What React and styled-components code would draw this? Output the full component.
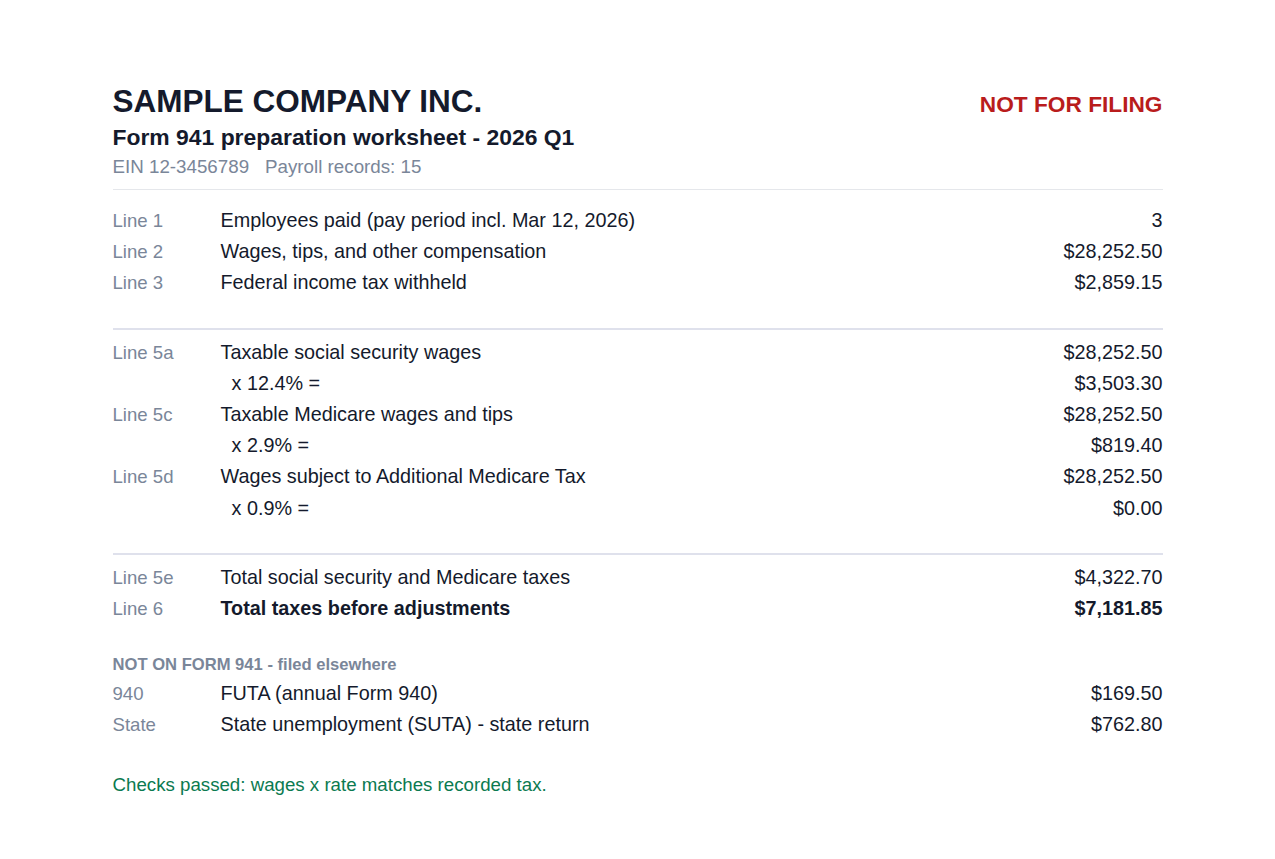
import React from "react";
import styled, { createGlobalStyle } from "styled-components";

const GlobalStyle = createGlobalStyle`
  html, body {
    margin: 0;
    padding: 0;
    background: #ffffff;
  }
  body {
    font-family: "Liberation Sans", Arial, Helvetica, sans-serif;
    color: #111827;
  }
`;

const sections = [
  [
    { label: "Line 1", desc: "Employees paid (pay period incl. Mar 12, 2026)", amount: "3" },
    { label: "Line 2", desc: "Wages, tips, and other compensation", amount: "$28,252.50" },
    { label: "Line 3", desc: "Federal income tax withheld", amount: "$2,859.15" },
  ],
  [
    { label: "Line 5a", desc: "Taxable social security wages", amount: "$28,252.50" },
    { desc: "x 12.4% =", amount: "$3,503.30", sub: true },
    { label: "Line 5c", desc: "Taxable Medicare wages and tips", amount: "$28,252.50" },
    { desc: "x 2.9% =", amount: "$819.40", sub: true },
    { label: "Line 5d", desc: "Wages subject to Additional Medicare Tax", amount: "$28,252.50" },
    { desc: "x 0.9% =", amount: "$0.00", sub: true },
  ],
  [
    { label: "Line 5e", desc: "Total social security and Medicare taxes", amount: "$4,322.70" },
    { label: "Line 6", desc: "Total taxes before adjustments", amount: "$7,181.85", bold: true },
  ],
];

const elsewhere = [
  { label: "940", desc: "FUTA (annual Form 940)", amount: "$169.50" },
  { label: "State", desc: "State unemployment (SUTA) - state return", amount: "$762.80" },
];

function Worksheet() {
  const renderRow = (row, i) => (
    <Row key={i}>
      <Label>{row.label || ""}</Label>
      <Desc $sub={row.sub} $bold={row.bold}>
        {row.desc}
      </Desc>
      <Amount $bold={row.bold}>{row.amount}</Amount>
    </Row>
  );

  return (
    <Page>
      <Header>
        <TitleRow>
          <Title>SAMPLE COMPANY INC.</Title>
          <Stamp>NOT FOR FILING</Stamp>
        </TitleRow>
        <Subtitle>Form 941 preparation worksheet - 2026 Q1</Subtitle>
        <Meta>
          <span>EIN 12-3456789</span>
          <span>Payroll records: 15</span>
        </Meta>
      </Header>

      {sections.map((rows, i) => (
        <Section key={i} $first={i === 0}>
          {rows.map(renderRow)}
        </Section>
      ))}

      <Note>NOT ON FORM 941 - filed elsewhere</Note>
      <div>{elsewhere.map(renderRow)}</div>

      <Checks>Checks passed: wages x rate matches recorded tax.</Checks>
    </Page>
  );
}

const Page = styled.div`
  max-width: 1050px;
  margin: 0 auto;
  padding: 83px 0 40px;
`;

const Header = styled.header`
  padding-bottom: 10px;
  border-bottom: 1px solid #e5e7eb;
`;

const TitleRow = styled.div`
  display: flex;
  justify-content: space-between;
  align-items: baseline;
`;

const Title = styled.h1`
  margin: 0;
  font-size: 31.5px;
  line-height: 36px;
  font-weight: 700;
  color: #141a2c;
`;

const Stamp = styled.div`
  font-size: 22.7px;
  line-height: 28px;
  font-weight: 700;
  color: #b91c1c;
`;

const Subtitle = styled.h2`
  margin: 4px 0 0;
  font-size: 22.9px;
  line-height: 28px;
  font-weight: 700;
  color: #141a2c;
`;

const Meta = styled.div`
  display: flex;
  gap: 16px;
  margin-top: 4px;
  font-size: 18.75px;
  line-height: 24px;
  color: #7a8699;
`;

const Section = styled.section`
  margin-top: ${(p) => (p.$first ? "15px" : "29px")};
  padding-top: ${(p) => (p.$first ? "0" : "7px")};
  border-top: ${(p) => (p.$first ? "none" : "2px solid #dfe1ec")};
`;

const Row = styled.div`
  display: grid;
  grid-template-columns: 108px 1fr auto;
  align-items: baseline;
  font-size: 19.8px;
  line-height: 31.2px;
`;

const Label = styled.div`
  font-size: 18.6px;
  color: #7a8699;
`;

const Desc = styled.div`
  padding-left: ${(p) => (p.$sub ? "11px" : "0")};
  font-weight: ${(p) => (p.$bold ? 700 : 400)};
  color: #141a2c;
`;

const Amount = styled.div`
  text-align: right;
  font-weight: ${(p) => (p.$bold ? 700 : 400)};
  color: #141a2c;
`;

const Note = styled.div`
  margin: 31px 0 3px;
  font-size: 16.6px;
  line-height: 20px;
  font-weight: 700;
  color: #7a8699;
`;

const Checks = styled.p`
  margin: 32px 0 0;
  font-size: 18.7px;
  line-height: 24px;
  color: #0b7a50;
`;

export default function App() {
  return (
    <>
      <GlobalStyle />
      <Worksheet />
    </>
  );
}
